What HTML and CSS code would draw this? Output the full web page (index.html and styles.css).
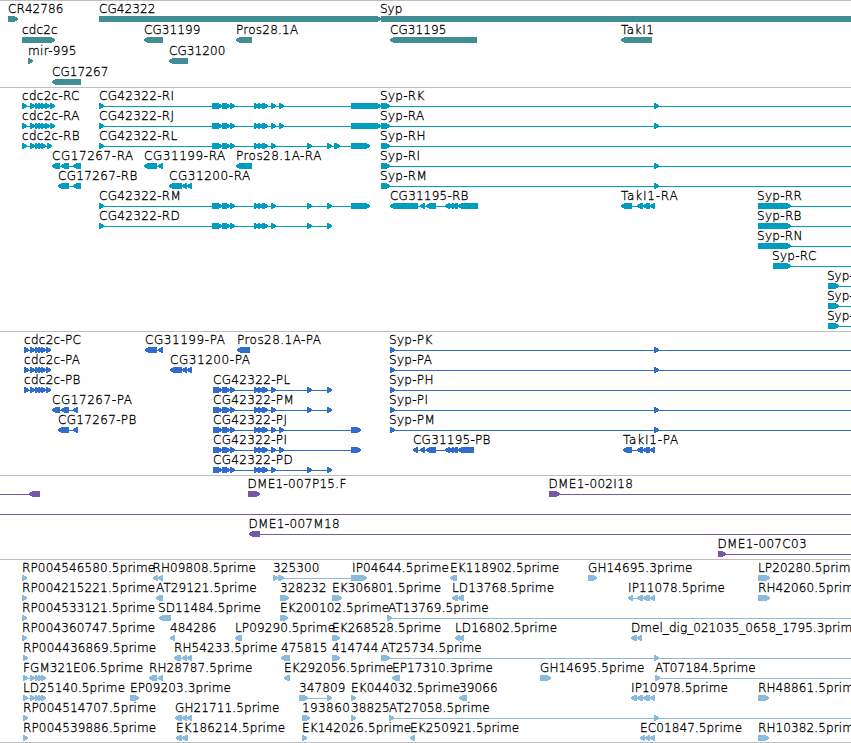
FILE: index.html
```html
<html>
<head>
  <meta charset="utf-8">
  <title>Genome Browser</title>
  <link rel="stylesheet" href="styles.css">
</head>
<body>
  <div id="tracks">
    <div class="track genes" data-track="genes"></div>
    <div class="track transcripts" data-track="transcripts"></div>
    <div class="track proteins" data-track="proteins"></div>
    <div class="track clones" data-track="clones"></div>
    <div class="track ests" data-track="ests"></div>
  </div>

<script type="text/javascript" src="tracks.js"></script>
</body>
</html>
```

FILE: styles.css
```css
body {
  margin: 0;
  background-color: #fff;
  overflow: hidden;
}

#tracks {
  width: 851px;
  overflow: hidden;
  border-bottom: 1px solid #bebebe;
}

.track {
  border-top: 1px solid #bebebe;
}

.track svg {
  display: block;
  width: 851px;
}

.track text {
  font-family: 'DejaVu Sans', sans-serif;
  font-size: 12px;
  font-weight: 200;
  fill: #000;
  stroke: #000;
  stroke-width: 0.3px;
}

.track path,
.track rect {
  shape-rendering: crispEdges;
}

.genes {
  fill: #408e93;
}

.transcripts {
  fill: #009dbf;
}

.proteins {
  fill: #306ccc;
}

.clones {
  fill: #7559a6;
}

.ests {
  fill: #88bbdd;
}
```

FILE: tracks.js
```javascript
// A line that leaves the view on the right.
var END = 860;

var CDC = [22,27, 30,35, 35,40, 38,43, 41,46, 45,50, 50,55];
var CDC_RB = [22,27, 30,35, 35,40, 38,43, 41,46, 47,52];
var CDC_P = [24,29, 30,35, 35,40, 38,43, 41,46, 46,51];
var MID = [222,230, 230,235, 254,259, 258,263, 262,268, 271,276];
var RI = [99,104, 212,222].concat(MID, [279,284, 351,381]);
var RL = [99,104, 212,222].concat(MID, [307,312, 327,332, 334,340, 351,370]);
var RM = [99,104, 212,222].concat(MID, [307,312, 327,332, 351,370]);
var RD = [99,104, 212,222].concat(MID, [307,312, 327,332]);
var PL = [213,222].concat(MID, [307,312, 327,332]);
var PJ = [213,222].concat(MID, [279,284, 351,361]);
var FGM = [23,28, 30,35, 35,40, 38,43, 41,46];

// Each feature: row, label, label x, strand, blocks, line start, line end
var tracks = {
  genes: { rowHeight: 21, height: 86, features: [
    [0, 'CR42786', 8, 1, [8,18]],
    [0, 'CG42322', 99, 1, [99,381]],
    [0, 'Syp', 380, 1, [381,END]],
    [1, 'cdc2c', 22, 1, [22,55]],
    [1, 'CG31199', 144, -1, [144,163]],
    [1, 'Pros28.1A', 236, -1, [236,252]],
    [1, 'CG31195', 390, -1, [390,477]],
    [1, 'TakI1', 621, -1, [621,652]],
    [2, 'mir-995', 28, 1, [28,33]],
    [2, 'CG31200', 169, -1, [169,188]],
    [3, 'CG17267', 52, -1, [52,81]]
  ]},
  transcripts: { rowHeight: 20, height: 243, features: [
    [0, 'cdc2c-RC', 22, 1, CDC],
    [0, 'CG42322-RI', 99, 1, RI],
    [0, 'Syp-RK', 380, 1, [381,390, 654,659], 381, END],
    [1, 'cdc2c-RA', 22, 1, CDC],
    [1, 'CG42322-RJ', 99, 1, RI],
    [1, 'Syp-RA', 380, 1, [381,390, 654,659], 381, END],
    [2, 'cdc2c-RB', 22, 1, CDC_RB],
    [2, 'CG42322-RL', 99, 1, RL],
    [2, 'Syp-RH', 380, 1, [381,390], 381, END],
    [3, 'CG17267-RA', 52, -1, [52,60, 61,69, 73,81]],
    [3, 'CG31199-RA', 144, -1, [144,157, 158,163]],
    [3, 'Pros28.1A-RA', 236, -1, [236,252]],
    [3, 'Syp-RI', 380, 1, [381,390, 654,659], 381, END],
    [4, 'CG17267-RB', 58, -1, [58,69, 73,81]],
    [4, 'CG31200-RA', 169, -1, [169,182, 182,187, 187,192]],
    [4, 'Syp-RM', 380, 1, [381,390, 654,659], 381, END],
    [5, 'CG42322-RM', 99, 1, RM],
    [5, 'CG31195-RB', 390, -1, [390,418, 420,425, 426,436, 445,450, 449,454, 452,458, 458,478]],
    [5, 'TakI1-RA', 621, -1, [621,632, 637,643, 643,650, 650,655]],
    [5, 'Syp-RR', 757, 1, [758,791], 758, END],
    [6, 'CG42322-RD', 99, 1, RD],
    [6, 'Syp-RB', 757, 1, [758,791], 758, END],
    [7, 'Syp-RN', 757, 1, [758,791], 758, END],
    [8, 'Syp-RC', 772, 1, [773,791], 773, END],
    [9, 'Syp-', 827, 1, [828,839], 828, END],
    [10, 'Syp-', 827, 1, [828,839], 828, END],
    [11, 'Syp-', 827, 1, [828,839], 828, END]
  ]},
  proteins: { rowHeight: 20, height: 143, features: [
    [0, 'cdc2c-PC', 24, 1, CDC_P],
    [0, 'CG31199-PA', 145, -1, [145,157, 158,163]],
    [0, 'Pros28.1A-PA', 237, -1, [237,250]],
    [0, 'Syp-PK', 389, 1, [390,395, 654,659], 390, END],
    [1, 'cdc2c-PA', 24, 1, CDC_P],
    [1, 'CG31200-PA', 170, -1, [170,182, 182,187, 187,192]],
    [1, 'Syp-PA', 389, 1, [390,395, 654,659], 390, END],
    [2, 'cdc2c-PB', 24, 1, CDC_P],
    [2, 'CG42322-PL', 213, 1, PL],
    [2, 'Syp-PH', 389, 1, [390,395], 390, END],
    [3, 'CG17267-PA', 52, -1, [52,60, 61,69, 73,78]],
    [3, 'CG42322-PM', 213, 1, PL],
    [3, 'Syp-PI', 389, 1, [390,395, 654,659], 390, END],
    [4, 'CG17267-PB', 58, -1, [58,69, 73,78]],
    [4, 'CG42322-PJ', 213, 1, PJ],
    [4, 'Syp-PM', 389, 1, [390,395, 654,659], 390, END],
    [5, 'CG42322-PI', 213, 1, PJ],
    [5, 'CG31195-PB', 413, -1, [413,418, 420,425, 426,436, 445,450, 449,454, 452,458, 458,474]],
    [5, 'TakI1-PA', 623, -1, [623,632, 637,643, 643,650, 650,655]],
    [6, 'CG42322-PD', 213, 1, PL]
  ]},
  clones: { rowHeight: 20, height: 83, features: [
    [0, '', 0, -1, [29,40], 0, 40],
    [0, 'DME1-007P15.F', 247.5, 1, [248,260]],
    [0, 'DME1-002I18', 548.5, 1, [549,560], 549, END],
    [1, '', 0, 1, [], 0, END],
    [2, 'DME1-007M18', 248.5, -1, [249,260], 249, END],
    [3, 'DME1-007C03', 717.5, 1, [718,726], 718, END]
  ]},
  ests: { rowHeight: 20, height: 182, features: [
    [0, 'RP004546580.5prime', 22, 1, [22,27]],
    [0, 'RH09808.5prime', 152.5, -1, [153,158, 158,163]],
    [0, '325300', 273, 1, [273,278, 278,284, 351,361]],
    [0, 'IP04644.5prime', 352, 1, [353,367]],
    [0, 'EK118902.5prime', 450, -1, [450,457]],
    [0, 'GH14695.3prime', 588, 1, [588,597]],
    [0, 'LP20280.5prime', 758, 1, [758,770]],
    [1, 'RP004215221.5prime', 22, 1, [22,27]],
    [1, 'AT29121.5prime', 156, -1, [156,163]],
    [1, '328232', 280, 1, [280,289]],
    [1, 'EK306801.5prime', 332, 1, [332,342]],
    [1, 'LD13768.5prime', 452, -1, [452,458, 458,464]],
    [1, 'IP11078.5prime', 628, -1, [628,633, 637,643, 643,650, 650,655]],
    [1, 'RH42060.5prime', 758, 1, [758,770]],
    [2, 'RP004533121.5prime', 22, 1, [22,27]],
    [2, 'SD11484.5prime', 158, -1, [159,171]],
    [2, 'EK200102.5prime', 280, 1, [280,288]],
    [2, 'AT13769.5prime', 388, 1, [387,392], 387, END],
    [3, 'RP004360747.5prime', 22, 1, [22,27]],
    [3, '484286', 170, -1, [170,175]],
    [3, 'LP09290.5prime', 235, -1, [235,242]],
    [3, 'EK268528.5prime', 332, 1, [332,340]],
    [3, 'LD16802.5prime', 455, -1, [455,460, 459,464]],
    [3, 'Dmel_dig_021035_0658_1795.3prime', 631, -1, [631,637, 637,642]],
    [4, 'RP004436869.5prime', 23, 1, [23,28]],
    [4, 'RH54233.5prime', 174, -1, [174,181, 182,187, 187,192]],
    [4, '475815', 281, -1, [281,290]],
    [4, '414744', 332, 1, [332,340]],
    [4, 'AT25734.5prime', 381, 1, [381,390, 654,659], 381, END],
    [5, 'FGM321E06.5prime', 23, 1, FGM],
    [5, 'RH28787.5prime', 149, -1, [149,157, 158,163]],
    [5, 'EK292056.5prime', 284, -1, [284,290]],
    [5, 'EP17310.3prime', 392, -1, [392,400]],
    [5, 'GH14695.5prime', 540, 1, [540,551]],
    [5, 'AT07184.5prime', 655, 1, [655,660], 655, END],
    [6, 'LD25140.5prime', 23, 1, FGM],
    [6, 'EP09203.3prime', 130, 1, [130,139]],
    [6, '347809', 299, 1, [299,308, 327,332]],
    [6, 'EK044032.5prime', 351, 1, [351,356]],
    [6, '39066', 459, -1, [459,467]],
    [6, 'IP10978.5prime', 631, -1, [631,637, 637,643, 643,650, 650,655]],
    [6, 'RH48861.5prime', 758, 1, [758,769]],
    [7, 'RP004514707.5prime', 23, 1, [23,28]],
    [7, 'GH21711.5prime', 175, -1, [175,182, 182,187, 187,192]],
    [7, '193860', 302, 1, [302,310]],
    [7, '38825', 351, 1, [351,356]],
    [7, 'AT27058.5prime', 389, 1, [389,394, 654,659], 389, END],
    [8, 'RP004539886.5prime', 23, 1, [23,28]],
    [8, 'EK186214.5prime', 176, -1, [176,182, 182,188]],
    [8, 'EK142026.5prime', 302, 1, [302,307]],
    [8, 'EK250921.5prime', 410, -1, [410,415]],
    [8, 'EC01847.5prime', 640, -1, [640,645, 645,650, 650,655]],
    [8, 'RH10382.5prime', 758, 1, [758,769]]
  ]}
};

/**
 * Path of one block, pointed on the side of its strand.
 */
function blockPath(x1, x2, y, strand) {
  var tip = strand > 0 ? x2 : x1;
  var tail = strand > 0 ? x1 : x2;
  var neck = tip - strand * 4;

  return 'M' + tail + ' ' + y + 'H' + neck + 'L' + tip + ' ' + (y + 2.2) +
    'V' + (y + 3.8) + 'L' + neck + ' ' + (y + 6) + 'H' + tail + 'Z';
}

/**
 * Markup of a feature: label, connecting line and blocks.
 */
function drawFeature(f, rowHeight) {
  var top = f[0] * rowHeight;
  var blocks = f[4];
  var from = f[5] !== undefined ? f[5] : blocks[0];
  var to = f[6] !== undefined ? f[6] : blocks[blocks.length - 1];
  var out = '';
  var d = '';

  if (f[5] !== undefined || blocks.length > 2) {
    // keep the line off the tips
    if (f[3] > 0 && to !== END) to -= 2;
    if (f[3] < 0 && from !== 0) from += 2;
    out += '<rect x="' + from + '" y="' + (top + 18) + '" width="' + (to - from) + '" height="1"/>';
  }
  for (var i = 0; i < blocks.length; i += 2) {
    d += blockPath(blocks[i], blocks[i + 1], top + 15, f[3]);
  }
  if (d) out += '<path d="' + d + '"/>';
  if (f[1]) out += '<text x="' + f[2] + '" y="' + (top + 12) + '">' + f[1] + '</text>';
  return out;
}

/**
 * Extra width of a label, in pixels.
 */
function labelStretch(label) {
  if (/^TakI1-/.test(label)) return 5.5;
  if (/^Syp/.test(label)) return label.length > 4 ? 1.5 : 0;
  if (/^(cdc2c|CG31195)-/.test(label)) return 2;
  if (/^DME1/.test(label)) return 3.5;
  if (/-[RP]A$/.test(label)) return 5;
  if (/-[RP]\w$/.test(label)) return 3;
  if (/^RP0/.test(label)) return 2.5;
  if (/prime$/.test(label)) return 1.5;
  if (/^(TakI1|Pros28|193860|mir)/.test(label)) return 2;
  return 0.5;
}

var els = document.querySelectorAll('.track');
for (var i = 0; i < els.length; i++) {
  var track = tracks[els[i].dataset.track];
  els[i].innerHTML = '<svg height="' + track.height + '">' +
    track.features.map(function (f) { return drawFeature(f, track.rowHeight); }).join('') +
    '</svg>';
}

var labels = document.querySelectorAll('.track text');
for (var j = 0; j < labels.length; j++) {
  var width = labels[j].getComputedTextLength() + labelStretch(labels[j].textContent);
  labels[j].setAttribute('textLength', width);
}
```
